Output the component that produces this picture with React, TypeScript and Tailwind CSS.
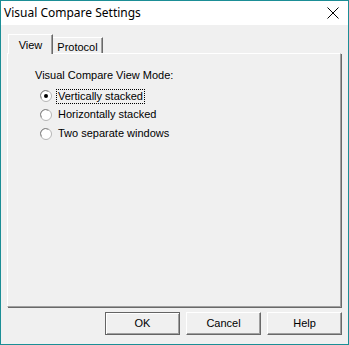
import React from "react";

function Radio({ checked }: { checked?: boolean }) {
  return (
    <svg width="12" height="12" viewBox="0 0 12 12" className="shrink-0">
      <circle cx="6" cy="6" r="5.5" fill="#ffffff" stroke="#b4b4b4" strokeWidth="1" />
      <path d="M1.5 8.5 A5 5 0 0 1 8.5 1.5" fill="none" stroke="#8a8a8a" strokeWidth="1" />
      {checked && <circle cx="6" cy="6" r="2" fill="#000000" />}
    </svg>
  );
}

function Btn({ label, def }: { label: string; def?: boolean }) {
  return (
    <div
      className={
        def
          ? "w-[75px] h-[23px] border border-[#646464] flex items-center justify-center bg-[#f0f0f0] shadow-[inset_1px_1px_0_#ffffff,inset_-1px_-1px_0_#a0a0a0]"
          : "w-[75px] h-[23px] border-t border-l border-t-white border-l-white border-r border-b border-r-[#696969] border-b-[#696969] shadow-[inset_-1px_-1px_0_#a0a0a0] flex items-center justify-center bg-[#f0f0f0]"
      }
    >
      <span className="text-[11px] text-black">{label}</span>
    </div>
  );
}

export default function App() {
  return (
    <div
      className="w-[349px] h-[345px] border border-[#1b8e96] bg-[#f0f0f0] flex flex-col relative overflow-hidden"
      style={{ fontFamily: '"Liberation Sans", Arial, sans-serif' }}
    >
      <div className="h-[24px] bg-white flex items-center justify-between pl-[3px] pr-[9px] shrink-0">
        <span className="text-[12px] text-black" style={{ fontFamily: '"Noto Sans", "Liberation Sans", sans-serif' }}>
          Visual Compare Settings
        </span>
        <svg width="12" height="12" viewBox="0 0 12 12">
          <path d="M0.5 0.5 L11.5 11.5 M11.5 0.5 L0.5 11.5" stroke="#000" strokeWidth="1" />
        </svg>
      </div>
      <div className="flex-1 flex flex-col pl-[6px] pr-[6px]">
        <div className="flex items-end h-[19px] mt-[9px] pl-[1px] relative z-10">
          <div className="w-[45px] h-[20px] -mb-[1px] bg-[#f0f0f0] border-t border-l border-t-white border-l-white border-r border-r-[#696969] shadow-[inset_-1px_0_0_#a0a0a0] flex justify-center pt-[2px]">
            <span className="text-[11px] text-black">View</span>
          </div>
          <div className="w-[50px] h-[16px] border-t border-t-white border-r border-r-[#696969] shadow-[inset_-1px_0_0_#a0a0a0] flex justify-center pt-[1px]">
            <span className="text-[11px] text-black">Protocol</span>
          </div>
        </div>
        <div className="h-[254px] w-[334px] border-t border-l border-t-white border-l-white border-r border-b border-r-[#a0a0a0] border-b-[#a0a0a0] shadow-[1px_1px_0_#696969] pt-[15px] pl-[27px]">
          <div className="text-[11px] text-black leading-[13px]">Visual Compare View Mode:</div>
          <div className="flex flex-col pl-[5px] mt-[5px]">
            <div className="flex items-center h-[18px] gap-[5px]">
              <Radio checked />
              <span className="text-[11px] text-black leading-[13px] px-[1px] outline outline-1 outline-dotted outline-black">Vertically stacked</span>
            </div>
            <div className="flex items-center h-[19px] gap-[6px]">
              <Radio />
              <span className="text-[11px] text-black leading-[13px]">Horizontally stacked</span>
            </div>
            <div className="flex items-center h-[19px] gap-[6px]">
              <Radio />
              <span className="text-[11px] text-black leading-[13px]">Two separate windows</span>
            </div>
          </div>
        </div>
        <div className="flex justify-end gap-[6px] mt-[5px]">
          <Btn label="OK" def />
          <Btn label="Cancel" />
          <Btn label="Help" />
        </div>
      </div>
    </div>
  );
}
